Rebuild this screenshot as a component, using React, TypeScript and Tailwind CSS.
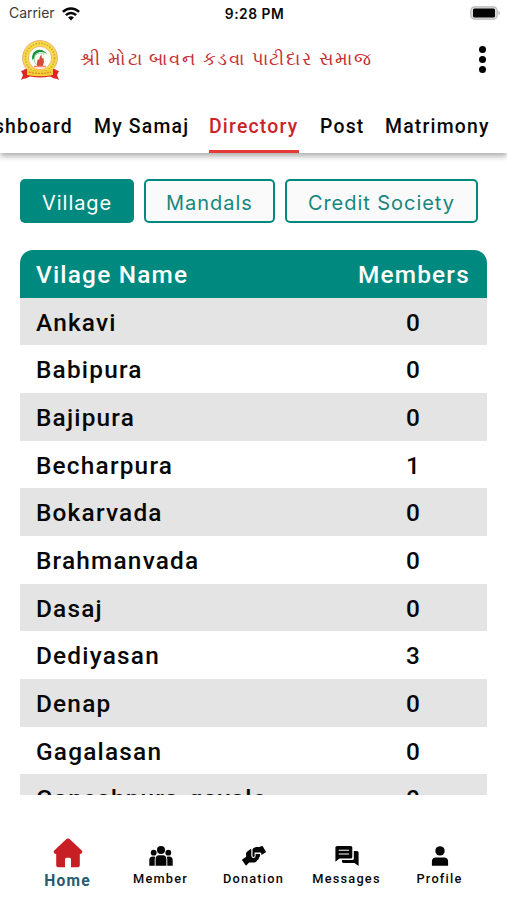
const tabs = [
  { name: "Dashboard", place: "w-[80px] ml-[-7px] justify-end" },
  { name: "My Samaj", place: "ml-[21px] w-[96px]" },
  { name: "Directory", place: "ml-[19px] w-[90px]" },
  { name: "Post", place: "ml-[21px] w-[44px]" },
  { name: "Matrimony", place: "ml-[21px] w-[106px]" },
];

const villages: [string, number][] = [
  ["Ankavi", 0],
  ["Babipura", 0],
  ["Bajipura", 0],
  ["Becharpura", 1],
  ["Bokarvada", 0],
  ["Brahmanvada", 0],
  ["Dasaj", 0],
  ["Dediyasan", 3],
  ["Denap", 0],
  ["Gagalasan", 0],
  ["Ganeshpura-gavale", 0],
];

function Emblem() {
  return (
    <svg className="mt-[-2px] h-[42px] w-[40px] shrink-0" viewBox="0 0 40 42">
      <circle cx="20" cy="19" r="17.4" fill="#f7dd45" stroke="#eba578" strokeWidth=".9" />
      <circle cx="20" cy="19" r="14.6" fill="none" stroke="#d3ad3e" strokeWidth="1.7" strokeDasharray="1.6 1.3" />
      <circle cx="20" cy="19" r="11.6" fill="#fffdf5" stroke="#eda36b" strokeWidth="0.8" />
      <path d="M12.3 21C10.5 11.5 20.5 6.5 27.5 15.2C21 10.7 14.5 13.5 14.3 19Z" fill="#16913c" />
      <path d="M14.2 20C14.5 14.5 20 12.5 24 15.5M14.2 20Q14 24 17 26" stroke="#72b584" strokeWidth=".7" fill="none" />
      <path d="M17 23L18 20L19 21L20 17.5L21.3 15.5L22 19.5L23.5 19L24 23L22.8 27H17Z" fill="#d94a3d" />
      <path d="M14 27.5H26" stroke="#ea8a68" strokeWidth="1.5" />
      <path d="M1 32L7 30V35L5 39L1 41L3 36ZM39 32L33 30V35L35 39L39 41L37 36Z" fill="#df2427" />
      <path d="M4.5 30Q20 34 35.5 30V40L30 37.5Q20 39.5 10 37.5L4.5 40Z" fill="#df2427" />
      <path d="M7 30Q20 33 33 30V36Q20 38.5 7 36Z" fill="#f5cf35" />
      <path d="M9 33.2Q20 35.8 31 33.2" fill="none" stroke="#cc8b27" strokeWidth="1.2" strokeDasharray="2 1" />
    </svg>
  );
}

function Wifi() {
  return (
    <svg className="ml-[7px] mt-[-1px] h-[14px] w-[18px]" viewBox="0 0 18 14" fill="none" stroke="#050505" strokeWidth="2.5">
      <path d="M.9 4.9C5.5.2 12.5.2 17.1 4.9" />
      <path d="M3.9 8.2C6.8 5.3 11.2 5.3 14.1 8.2" />
      <path d="M6.1 10.5Q9 8.1 11.9 10.5L9 13.4Z" fill="#050505" stroke="none" />
    </svg>
  );
}

function Battery() {
  return (
    <svg className="mt-[-2px] h-[14px] w-[31px]" viewBox="0 0 31 14">
      <rect x=".8" y=".8" width="26.4" height="12.4" rx="3.8" fill="#dedede" stroke="#bababa" strokeWidth="1.2" />
      <rect x="3" y="2.6" width="22" height="8.8" rx="1.5" fill="#050505" />
      <path d="M28.4 5V9Q30.2 8.4 30.2 7T28.4 5Z" fill="#bababa" />
    </svg>
  );
}

function HomeIcon() {
  return (
    <svg className="h-[30px] w-[30px]" viewBox="0 0 30 30" fill="#c81f25">
      <path d="M12.9 1.5Q15 -.5 17.1 1.5L28.5 12.3Q29.9 13.8 28.8 15.3Q28.2 16 26.8 16V26.7Q26.8 29.3 24.2 29.3H18V21.3Q18 19.8 16.5 19.8H13.5Q12 19.8 12 21.3V29.3H5.8Q3.2 29.3 3.2 26.7V16Q1.8 16 1.2 15.3Q.1 13.8 1.5 12.3Z" />
    </svg>
  );
}

function MemberIcon() {
  return (
    <svg className="h-[20px] w-[24px]" viewBox="0 0 24 20" fill="#050505">
      <circle cx="12" cy="4.1" r="4" />
      <circle cx="4.7" cy="6.7" r="2.9" />
      <circle cx="19.3" cy="6.7" r="2.9" />
      <path d="M6.6 19.8V13Q6.6 9.2 10 9.2H14Q17.4 9.2 17.4 13V19.8ZM.3 19.8V14Q.3 10.5 4 10.5Q5.2 10.5 6.2 10.8Q5.7 12 5.7 14V19.8ZM23.7 19.8V14Q23.7 10.5 20 10.5Q18.8 10.5 17.8 10.8Q18.3 12 18.3 14V19.8Z" />
    </svg>
  );
}

function DonationIcon() {
  return (
    <svg className="h-[20px] w-[24px]" viewBox="0 0 24 20" fill="#050505">
      <path d="M.3 13.4L4.1 10.8V7.3Q4.2 6.4 5 5.7L8.3 3.2Q9 2.7 9.3 3.4V9.7Q9.4 12 11.5 12Q13.6 12 13.6 9.8V7.9H17.9Q18.6 10.4 17 11.5Q17.1 13.6 15.2 14.3Q14.6 16.3 12.6 16.4H7.2L4.5 19.3Q4 19.8 3.5 19.1L.1 14.3Q-.2 13.7.3 13.4Z" />
      <path d="M10.5 3.8Q10.5 2.8 11.3 2.3L12.7 1.5Q13.4 1.1 14.2 1.1H17.6L19.8.1Q20.5-.2 20.9.5L23.8 5.5Q24.1 6.1 23.5 6.5L19.4 9.1V8Q19.4 6.6 18 6.6H12.6V9.7Q12.6 10.9 11.5 10.9Q10.5 10.9 10.5 9.7Z" />
    </svg>
  );
}

function MessageIcon() {
  return (
    <svg className="h-[20px] w-[24px]" viewBox="0 0 24 20" fill="#050505">
      <path d="M2.2 0H15.8Q17.3 0 17.3 1.5V11Q17.3 12.5 15.8 12.5H4.5L.4 15.8V1.6Q.4 0 2.2 0Z" />
      <path d="M18.8 5H22Q23.6 5 23.6 6.6V20L19.5 17H8.5Q7 17 7 15.5V14H17.3Q18.8 14 18.8 12.4Z" />
      <path d="M3.7 4.3H14M3.7 8H14" stroke="white" strokeWidth="1.1" />
    </svg>
  );
}

function ProfileIcon() {
  return (
    <svg className="h-[20px] w-[18px]" viewBox="0 0 18 20" fill="#050505">
      <circle cx="9" cy="4.9" r="4.7" />
      <path d="M.9 19.7V15.8Q.9 11.6 5 11.6H13Q17.1 11.6 17.1 15.8V19.7Z" />
    </svg>
  );
}

export default function App() {
  return (
    <div className="flex h-[900px] w-[507px] flex-col overflow-hidden bg-white font-['Roboto','Noto_Sans',sans-serif] text-[#080808]">
      <header className="relative z-10 h-[153px] shrink-0 bg-white shadow-[0_3px_6px_rgba(0,0,0,.34)]">
        <div className="grid h-[28px] grid-cols-3 items-center pl-[9px] pr-[6px] font-['Inter',sans-serif]">
          <div className="flex items-center text-[14px] leading-[18px] tracking-[-0.05px] text-[#3b3b3b]"><span className="mt-[-2px]">Carrier</span><Wifi /></div>
          <div className="whitespace-nowrap pr-[1px] text-center text-[13.8px] font-semibold tracking-[.5px]">9:28 PM</div>
          <div className="flex justify-end"><Battery /></div>
        </div>
        <div className="flex h-[66px] items-center pl-[20px] pr-[21px]">
          <Emblem />
          <h1 className="ml-[20px] mt-[-5px] whitespace-nowrap text-[18.1px] font-normal tracking-[1.68px] text-[#c63035]">શ્રી મોટા બાવન કડવા પાટીદાર સમાજ</h1>
          <div className="mt-[-4px] ml-auto flex flex-col gap-[3px]">
            <i className="size-[7px] rounded-full bg-black" />
            <i className="size-[7px] rounded-full bg-black" />
            <i className="size-[7px] rounded-full bg-black" />
          </div>
        </div>
        <nav className="flex h-[59px]">
          {tabs.map((t) => (
            <div
              key={t.name}
              className={`flex shrink-0 whitespace-nowrap pt-[19px] text-[19.4px] leading-[28px] font-medium tracking-[1.2px] ${t.place} ${t.name === "Directory" ? "border-b-[3px] border-[#e53935] text-[#ca242b]" : ""}`}
            >
              {t.name}
            </div>
          ))}
        </nav>
      </header>

      <main className="flex h-[642px] shrink-0 flex-col overflow-hidden pl-[20.4px] pr-[19.6px] pt-[26px]">
        <div className="flex shrink-0 gap-[10px] font-['Inter',sans-serif] text-[20px] tracking-[.95px] text-[#16877e]">
          <button className="h-[44px] w-[113.5px] rounded-[5px] bg-[#00897f] pt-[3px] text-white">Village</button>
          <button className="h-[44px] w-[131px] rounded-[5px] border-2 border-[#00897f] bg-[#fafafa] pt-[3px]">Mandals</button>
          <button className="h-[44px] w-[193px] whitespace-nowrap rounded-[5px] border-2 border-[#00897f] bg-[#fafafa] pt-[3px]">Credit Society</button>
        </div>
        <section className="mt-[27px] flex flex-col text-[24.4px] font-medium tracking-[1.2px]">
          <div className="flex h-[47.6px] shrink-0 items-center justify-between rounded-t-[13px] bg-[#00897f] pl-[15.6px] pr-[17.5px] pt-[4px] text-white">
            <span>Vilage Name</span>
            <span>Members</span>
          </div>
          {villages.map(([name, count]) => (
            <div key={name} className="flex h-[47.67px] shrink-0 items-center pl-[15.6px] pt-[3.2px] odd:bg-white even:bg-[#e4e4e4]">
              <span className="flex-1">{name}</span>
              <span className="w-[147.5px] text-center">{count}</span>
            </div>
          ))}
        </section>
      </main>

      <footer className="grid h-[105px] grid-cols-5 px-[21px] pt-[43px] text-[12.8px] font-medium tracking-[1.2px]">
        <div className="flex flex-col items-center text-[15.6px] font-bold text-[#285b70]"><HomeIcon /><span className="mt-[2px]">Home</span></div>
        <div className="flex flex-col items-center pt-[8px]"><MemberIcon /><span className="mt-[3px]">Member</span></div>
        <div className="flex flex-col items-center pt-[8px]"><DonationIcon /><span className="mt-[3px]">Donation</span></div>
        <div className="flex flex-col items-center pt-[8px]"><MessageIcon /><span className="mt-[3px]">Messages</span></div>
        <div className="flex flex-col items-center pt-[8px]"><ProfileIcon /><span className="mt-[3px]">Profile</span></div>
      </footer>
    </div>
  );
}
